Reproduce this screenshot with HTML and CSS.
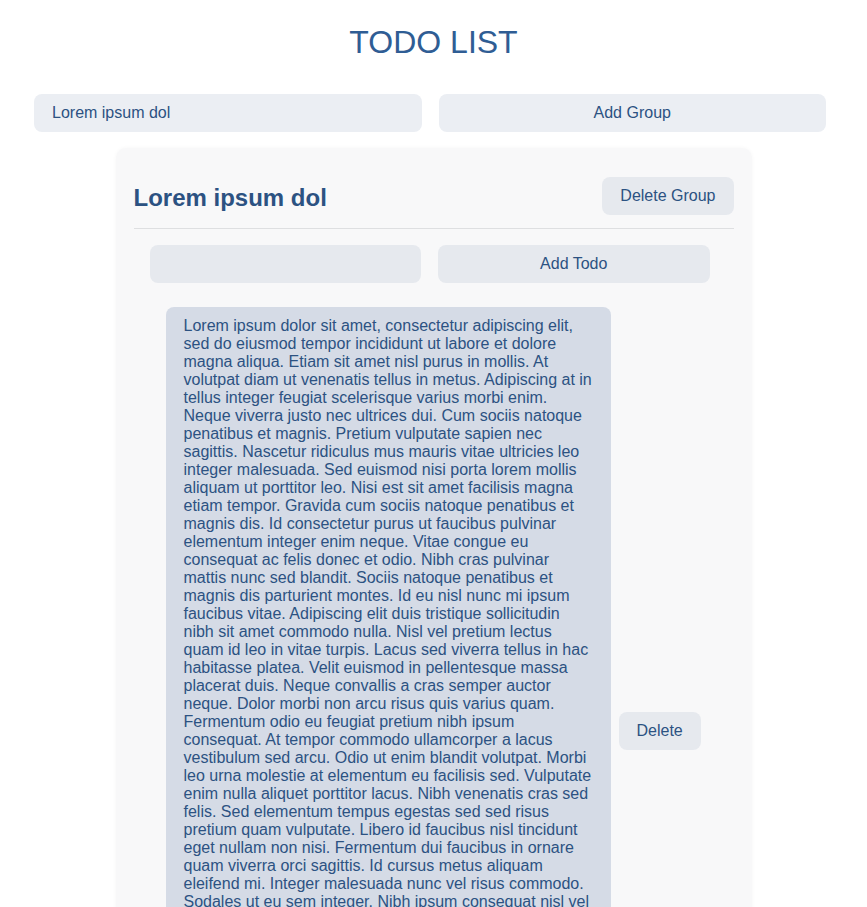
FILE: index.html
```html
<!DOCTYPE html>
<html lang="en">
<head>
<meta charset="utf-8">
<title>TODO LIST</title>
<link rel="stylesheet" href="styles.css">
</head>
<body>
<h1 class="title">TODO LIST</h1>
<form class="add-row add-group">
  <input class="field field-top" type="text" value="Lorem ipsum dol">
  <button class="btn btn-top" type="button">Add Group</button>
</form>
<section class="group">
  <header class="group-head">
    <h2 class="group-title">Lorem ipsum dol</h2>
    <button class="btn" type="button">Delete Group</button>
  </header>
  <form class="add-row add-todo">
    <input class="field" type="text" value="">
    <button class="btn" type="button">Add Todo</button>
  </form>
  <ul class="todos">
    <li class="todo">
      <p class="todo-text">Lorem ipsum dolor sit amet, consectetur adipiscing elit, sed do eiusmod tempor incididunt ut labore et dolore magna aliqua. Etiam sit amet nisl purus in mollis. At volutpat diam ut venenatis tellus in metus. Adipiscing at in tellus integer feugiat scelerisque varius morbi enim. Neque viverra justo nec ultrices dui. Cum sociis natoque penatibus et magnis. Pretium vulputate sapien nec sagittis. Nascetur ridiculus mus mauris vitae ultricies leo integer malesuada. Sed euismod nisi porta lorem mollis aliquam ut porttitor leo. Nisi est sit amet facilisis magna etiam tempor. Gravida cum sociis natoque penatibus et magnis dis. Id consectetur purus ut faucibus pulvinar elementum integer enim neque. Vitae congue eu consequat ac felis donec et odio. Nibh cras pulvinar mattis nunc sed blandit. Sociis natoque penatibus et magnis dis parturient montes. Id eu nisl nunc mi ipsum faucibus vitae. Adipiscing elit duis tristique sollicitudin nibh sit amet commodo nulla. Nisl vel pretium lectus quam id leo in vitae turpis. Lacus sed viverra tellus in hac habitasse platea. Velit euismod in pellentesque massa placerat duis. Neque convallis a cras semper auctor neque. Dolor morbi non arcu risus quis varius quam. Fermentum odio eu feugiat pretium nibh ipsum consequat. At tempor commodo ullamcorper a lacus vestibulum sed arcu. Odio ut enim blandit volutpat. Morbi leo urna molestie at elementum eu facilisis sed. Vulputate enim nulla aliquet porttitor lacus. Nibh venenatis cras sed felis. Sed elementum tempus egestas sed sed risus pretium quam vulputate. Libero id faucibus nisl tincidunt eget nullam non nisi. Fermentum dui faucibus in ornare quam viverra orci sagittis. Id cursus metus aliquam eleifend mi. Integer malesuada nunc vel risus commodo. Sodales ut eu sem integer. Nibh ipsum consequat nisl vel pretium lectus quam id. Lacus vel facilisis volutpat est velit egestas dui id ornare. Ultrices gravida dictum fusce ut placerat orci nulla pellentesque dignissim. Id diam vel quam elementum pulvinar etiam non quam lacus. Nunc sed augue lacus viverra vitae congue eu consequat. Est ultricies integer quis auctor elit sed vulputate mi sit. Egestas egestas fringilla phasellus faucibus scelerisque eleifend donec pretium. Mauris pharetra et ultrices neque ornare aenean euismod elementum nisi. Tempus imperdiet nulla malesuada pellentesque elit eget gravida cum. Quam pellentesque nec nam aliquam sem et tortor consequat id. Dui faucibus in ornare quam viverra orci sagittis eu volutpat.</p>
      <button class="btn" type="button">Delete</button>
    </li>
  </ul>
</section>
</body>
</html>
```
FILE: styles.css
```css
* { box-sizing: border-box; }

body {
  margin: 0;
  background: #ffffff;
  font-family: "Liberation Sans", Arial, sans-serif;
  font-size: 16px;
  color: #2c5282;
}

.title {
  margin: 24px 0 0;
  font-size: 32px;
  font-weight: 400;
  line-height: 37px;
  text-align: center;
  color: #2f5d94;
}

.add-row {
  display: grid;
  grid-template-columns: 1fr 1fr;
  column-gap: 17px;
}

.add-group {
  margin: 33px 41px 0 34px;
}

.field,
.btn {
  height: 38px;
  border: none;
  border-radius: 8px;
  font: inherit;
  color: #2c5282;
  line-height: 18px;
  outline: none;
}

.field {
  padding: 0 18px;
  background: #e6e9ee;
}

.btn {
  padding: 0 18px;
  background: #e6e9ee;
  cursor: pointer;
  white-space: nowrap;
}

.field-top,
.btn-top {
  background: #ebeef3;
}

.group {
  width: 636px;
  margin: 16px auto 0;
  padding: 0 18px 24px;
  background: #f8f8f9;
  border-radius: 10px;
  box-shadow: 0 0 4px rgba(0, 0, 0, 0.04);
}

.group-head {
  display: flex;
  align-items: center;
  justify-content: space-between;
  padding: 29px 0 13px;
  border-bottom: 1px solid #dedfe1;
}

.group-title {
  margin: 0;
  font-size: 24px;
  font-weight: 700;
  line-height: 28px;
  color: #2c5282;
  padding-top: 4px;
}

.add-todo {
  margin: 16px 24px 0 16px;
}

.todos {
  list-style: none;
  margin: 24px 0 0;
  padding: 0 0 0 32px;
}

.todo {
  display: flex;
  align-items: center;
  gap: 8px;
}

.todo-text {
  width: 445px;
  margin: 0;
  padding: 10px 18px;
  background: #d5dbe6;
  border-radius: 8px;
  line-height: 18px;
  color: #2c5282;
}
```
